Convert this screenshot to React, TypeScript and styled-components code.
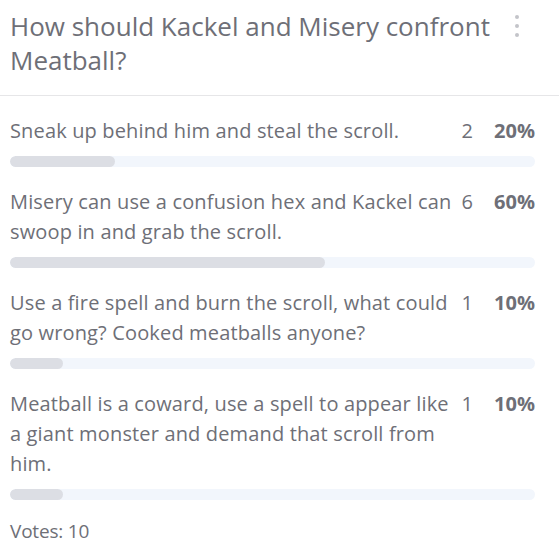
import React from "react";
import styled, { createGlobalStyle } from "styled-components";

type Option = {
  label: string;
  votes: number;
};

const options: Option[] = [
  { label: "Sneak up behind him and steal the scroll.", votes: 2 },
  {
    label:
      "Misery can use a confusion hex and Kackel can swoop in and grab the scroll.",
    votes: 6,
  },
  {
    label:
      "Use a fire spell and burn the scroll, what could go wrong? Cooked meatballs anyone?",
    votes: 1,
  },
  {
    label:
      "Meatball is a coward, use a spell to appear like a giant monster and demand that scroll from him.",
    votes: 1,
  },
];

const GlobalStyle = createGlobalStyle`
  body {
    margin: 0;
    background: #fff;
    font-family: "Open Sans", "Noto Sans", sans-serif;
    color: #6e6f77;
  }
`;

const App: React.FC = () => {
  const total = options.reduce((sum, o) => sum + o.votes, 0);

  return (
    <>
      <GlobalStyle />
      <PollCard>
        <PollHeader>
          <Question>How should Kackel and Misery confront Meatball?</Question>
          <MenuButton aria-label="More">
            <Dot />
            <Dot />
            <Dot />
          </MenuButton>
        </PollHeader>
        <PollBody>
          {options.map((o) => {
            const pct = Math.round((o.votes / total) * 100);
            return (
              <OptionRow key={o.label}>
                <OptionLabel>{o.label}</OptionLabel>
                <OptionCount>{o.votes}</OptionCount>
                <OptionPercent>{`${pct}%`}</OptionPercent>
                <BarTrack>
                  <BarFill style={{ width: `${pct}%` }} />
                </BarTrack>
              </OptionRow>
            );
          })}
          <VotesTotal>{`Votes: ${total}`}</VotesTotal>
        </PollBody>
      </PollCard>
    </>
  );
};

export default App;

const PollCard = styled.div`
  width: 559px;
  background: #fff;
`;

const PollHeader = styled.div`
  display: flex;
  justify-content: space-between;
  align-items: flex-start;
  padding: 9px 40px 18px 10px;
  border-bottom: 1px solid #e6e6e8;
`;

const Question = styled.h2`
  flex: 1;
  margin: 0;
  font-size: 26px;
  line-height: 34px;
  font-weight: 400;
  color: #6e6f77;
`;

const MenuButton = styled.div`
  display: flex;
  flex-direction: column;
  gap: 5px;
  padding-top: 6px;
`;

const Dot = styled.span`
  width: 4px;
  height: 4px;
  border-radius: 50%;
  background: #c3c4c9;
`;

const PollBody = styled.div`
  padding: 20px 24px 10px 10px;
`;

const OptionRow = styled.div`
  display: grid;
  grid-template-columns: 1fr auto 62px;
  margin-bottom: 20px;
  font-size: 20px;
  line-height: 30px;
  letter-spacing: 0.15px;
`;

const OptionLabel = styled.div``;

const OptionCount = styled.div`
  padding-left: 3px;
  text-align: right;
`;

const OptionPercent = styled.div`
  font-weight: 700;
  text-align: right;
  letter-spacing: 0;
`;

const BarTrack = styled.div`
  grid-column: 1 / -1;
  margin-top: 10px;
  height: 11px;
  border-radius: 6px;
  background: #f2f6fc;
  overflow: hidden;
`;

const BarFill = styled.div`
  height: 100%;
  border-radius: 6px;
  background: #dcdee4;
`;

const VotesTotal = styled.div`
  margin-top: 4px;
  font-size: 19px;
  line-height: 22px;
  letter-spacing: -0.2px;
`;
